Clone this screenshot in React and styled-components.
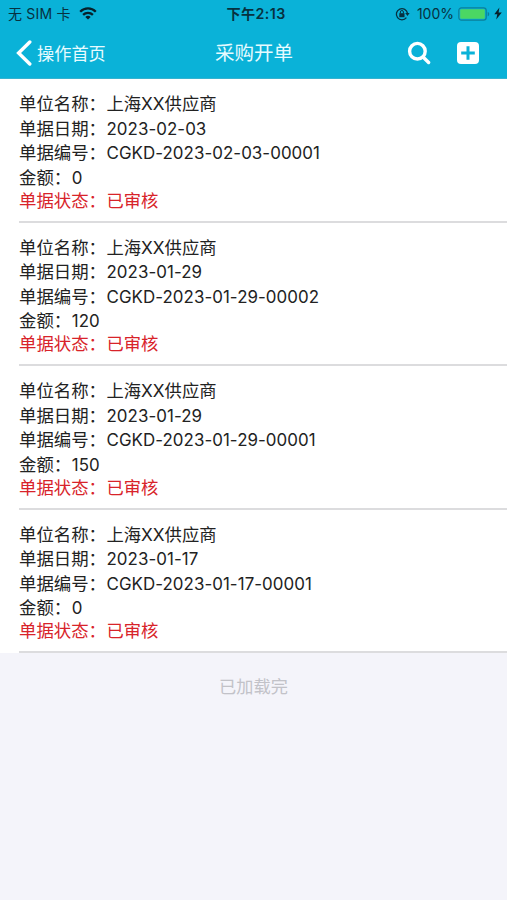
import React from 'react';
import styled, { createGlobalStyle } from 'styled-components';

const GlobalStyle = createGlobalStyle`
    * {
        box-sizing: border-box;
    }
    body {
        margin: 0;
        background: #f4f4fa;
        font-family: Inter, 'Noto Sans CJK SC', sans-serif;
    }
`;

const Page = styled.div`
    min-height: 900px;
    background: #f4f4fa;
`;

const Header = styled.header`
    height: 79px;
    background: #0ab2d8;
    border-bottom: 1px solid #35b3d0;
`;

const StatusBar = styled.div`
    display: grid;
    grid-template-columns: 1fr auto 1fr;
    align-items: center;
    height: 27px;
    padding: 0 5px 0 8px;
    color: #07313f;
    line-height: 27px;
    white-space: nowrap;
`;

const Carrier = styled.div`
    display: flex;
    align-items: center;
    gap: 8px;
    font-size: 14px;
    letter-spacing: 0.2px;
`;

const Clock = styled.div`
    font-weight: 600;
    font-size: 14.2px;
    letter-spacing: 0.4px;
    padding-left: 2px;
`;

const Battery = styled.div`
    display: flex;
    align-items: center;
    justify-content: flex-end;
    gap: 4px;
    font-size: 14px;
`;

const LockIcon = styled.svg`
    margin-right: 3px;
`;

const NavBar = styled.nav`
    display: grid;
    grid-template-columns: 1fr auto 1fr;
    align-items: center;
    height: 51px;
    padding: 0 28px 0 16px;
    color: #e6fbff;
`;

const BackButton = styled.div`
    display: flex;
    align-items: center;
    gap: 5px;
    font-size: 17.2px;
`;

const Title = styled.div`
    font-size: 19.5px;
    line-height: 50px;
    padding-left: 13px;
`;

const Actions = styled.div`
    display: flex;
    align-items: center;
    justify-content: flex-end;
    gap: 26px;
`;

const List = styled.ul`
    margin: 0;
    padding: 0;
    list-style: none;
    background: white;
`;

const Order = styled.li`
    height: 143.5px;
    padding: 13.4px 0 0 19px;
    background: linear-gradient(#dcdcde, #dcdcde) 19px 100% / 100% 2px no-repeat;
`;

const Line = styled.div`
    display: flex;
    height: 24.4px;
    line-height: ${({ $status }) => ($status ? '22px' : '24.4px')};
    font-size: 17.4px;
    color: ${({ $status }) => ($status ? '#d8232a' : '#222')};
    white-space: nowrap;
`;

const Value = styled.span`
    padding-left: 0.5px;
    font-size: ${({ $latin }) => ($latin ? '16.9px' : '17.3px')};
    letter-spacing: ${({ $latin }) => ($latin ? '0.06px' : '0')};
`;

const Footer = styled.div`
    padding-top: 21px;
    font-size: 17.2px;
    line-height: 25px;
    text-align: center;
    color: #c2c2c8;
`;

const orders = [
    { date: '2023-02-03', code: 'CGKD-2023-02-03-00001', amount: '0' },
    { date: '2023-01-29', code: 'CGKD-2023-01-29-00002', amount: '120' },
    { date: '2023-01-29', code: 'CGKD-2023-01-29-00001', amount: '150' },
    { date: '2023-01-17', code: 'CGKD-2023-01-17-00001', amount: '0' },
];

const Wifi = () => (
    <svg width="18" height="13" viewBox="0 0 18 13" fill="none" stroke="#07212b" strokeWidth="2.3">
        <path d="M1.2 4.8C5.6.3 12.4.3 16.8 4.8" />
        <path d="M4.1 7.9c2.8-2.8 7-2.8 9.8 0" />
        <path d="M9 12.6 6.3 9.9c1.6-1.5 3.8-1.5 5.4 0z" fill="#07212b" stroke="none" />
    </svg>
);

const RotationLock = () => (
    <LockIcon width="15" height="14" viewBox="0 0 15 14" fill="none" stroke="#07313f">
        <path d="M11.4 10.6A5.6 5.6 0 1 1 12.5 6.4" strokeWidth="1.3" />
        <path d="M10.2 6h4.4l-2.1 3z" fill="#07313f" stroke="none" />
        <rect x="4.3" y="6.2" width="5.2" height="4" fill="#07313f" stroke="none" />
        <path d="M5.4 6.4V5a1.5 1.5 0 0 1 3 0v1.4" strokeWidth="1" />
    </LockIcon>
);

const BatteryIcon = () => (
    <svg width="32" height="14" viewBox="0 0 32 14">
        <rect x=".8" y=".8" width="27.4" height="12.4" rx="2.6" fill="none" stroke="#0b7f99" strokeWidth="1.2" />
        <rect x="2.2" y="2.2" width="24.6" height="9.6" rx="1.2" fill="#4bd763" />
        <path d="M29.7 4.7c2 .8 2 3.8 0 4.6z" fill="#0b7f99" />
    </svg>
);

const Bolt = () => (
    <svg width="8" height="13" viewBox="0 0 8 13">
        <path d="M5.4.5.3 7.2h3L2.2 12.5 7.8 5.4H4.6z" fill="#07212b" />
    </svg>
);

const Field = ({ label, children, latin, status }) => (
    <Line $status={status}>
        <span>{label}：</span>
        <Value $latin={latin}>{children}</Value>
    </Line>
);

const App = () => (
    <Page lang="zh-CN">
        <GlobalStyle />
        <Header>
            <StatusBar>
                <Carrier>
                    <span>无 SIM 卡</span>
                    <Wifi />
                </Carrier>
                <Clock>下午2:13</Clock>
                <Battery>
                    <RotationLock />
                    <span>100%</span>
                    <BatteryIcon />
                    <Bolt />
                </Battery>
            </StatusBar>
            <NavBar>
                <BackButton>
                    <svg width="16" height="26" viewBox="0 0 16 26" fill="none" stroke="white" strokeWidth="3.4" strokeLinecap="round">
                        <path d="M13.8 2 2.6 13l11.2 11" />
                    </svg>
                    <span>操作首页</span>
                </BackButton>
                <Title>采购开单</Title>
                <Actions>
                    <svg width="24" height="24" viewBox="0 0 24 24" fill="none" stroke="white" strokeWidth="3.4" strokeLinecap="round">
                        <circle cx="10.4" cy="10.2" r="7.8" />
                        <path d="m16.3 16.2 5.3 5.3" />
                    </svg>
                    <svg width="22" height="22" viewBox="0 0 22 22">
                        <rect width="22" height="22" rx="4" fill="white" />
                        <path d="M11 4.2v13.6M4.2 11h13.6" stroke="#0ab2d8" strokeWidth="3" />
                    </svg>
                </Actions>
            </NavBar>
        </Header>
        <List>
            {orders.map(order => (
                <Order key={order.code}>
                    <Field label="单位名称">上海XX供应商</Field>
                    <Field label="单据日期" latin>
                        {order.date}
                    </Field>
                    <Field label="单据编号" latin>
                        {order.code}
                    </Field>
                    <Field label="金额" latin>
                        {order.amount}
                    </Field>
                    <Field label="单据状态" status>
                        已审核
                    </Field>
                </Order>
            ))}
        </List>
        <Footer>已加载完</Footer>
    </Page>
);

export default App;
